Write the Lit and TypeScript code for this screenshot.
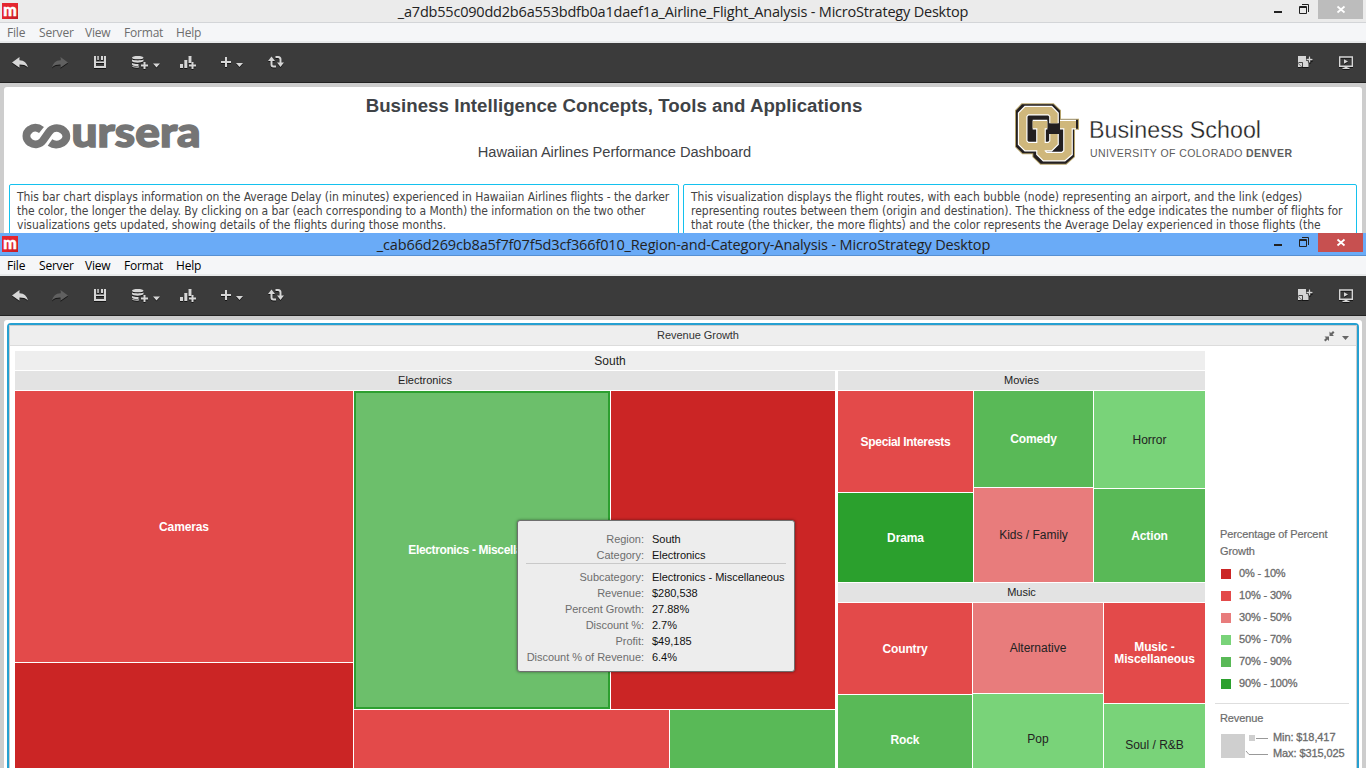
import { LitElement, html, svg, css, nothing, TemplateResult } from "lit";
import { customElement, property } from "lit/decorators.js";
import { classMap } from "lit/directives/class-map.js";

/* ---------- toolbar ---------- */

const plusMark = (x: number, y: number, r: number) =>
  svg`<path d="M${x - r} ${y}H${x + r}M${x} ${y - r}V${y + r}" stroke-width="2" fill="none" stroke="currentColor"/>`;
const caret = (x: number, y: number) => svg`<path d="M${x} ${y}h7l-3.5 4z" fill="currentColor"/>`;

const glyphs: Record<string, unknown> = {
  back: svg`<path d="M12 19.5 19.5 14v3.2c4.8.2 7.5 3 8.5 7.3-2.3-2.4-5-3-8.5-3v3.300z" fill="currentColor"/>`,
  redo: svg`<path d="M28 19.5 20.5 14v3.2c-4.8.2-7.5 3-8.5 7.3 2.3-2.4 5-3 8.5-3v3.300z" fill="currentColor"/>`,
  save: svg`<path d="M15 13v11h10V13" fill="none" stroke="currentColor" stroke-width="2"/><path d="M14 18.500h12v1.500H14zM17.300 13h1.500v4h-1.500zM21 13h2v4h-2z" fill="currentColor"/>`,
  data: svg`<path d="M12 14.700c0-1 2.500-1.700 5.700-1.700s5.800.7 5.800 1.700-2.600 1.600-5.800 1.600-5.700-.6-5.700-1.600zM12 16.600c3 1.200 8.500 1.200 11.500 0v1.700c-1 .8-3.500 1.400-5.800 1.400-3 0-5.700-.7-5.700-1.600zM12 20c2 .9 4.500 1 6.500.9v2.300c-3.500.2-6.500-.5-6.500-1.600zM12 23c2 .6 4.500.7 7 .6v1c-3.500.3-7-.3-7-1.600z" fill="currentColor"/>${plusMark(24.5, 22.5, 3.5)}${caret(33, 20.5)}`,
  chart: svg`<path d="M12 21h3v4h-3zM16.300 17h3v8h-3zM20.500 13h3v7h-3z" fill="currentColor"/>${plusMark(24.5, 22.5, 3.5)}`,
  add: svg`<path d="M13 19h10M18 14v10" stroke="currentColor" stroke-width="2"/>${caret(28, 20)}`,
  refresh: svg`<path d="M15.500 16v5.500q0 2 2 2h2.500M19.500 14H22q2.500 0 2.500 2.500V20" fill="none" stroke="currentColor" stroke-width="2"/><path d="M12 18l3.500-4.500L19 18zM21 19.500h7L24.500 24z" fill="currentColor"/>`,
  note: svg`<path d="M12 13h8v4.500h2.500v6.500h-6.500l-4-4zM12 20.500v3.500h3.500z" fill="currentColor"/><path d="M12.500 19.500h4v4.500" stroke="#222" fill="none" stroke-width=".8"/><path d="M23.500 13.500v6M20.500 16.500h6" stroke="#222" stroke-width="3.200"/><path d="M23.500 13.500v6M20.500 16.500h6" stroke="currentColor" stroke-width="1.400"/>`,
  present: svg`<path d="M13.700 14h12.600v9.200H13.700z" fill="none" stroke="currentColor" stroke-width="1.400"/><path d="M18 16.200l4 2.300-4 2.300zM18.500 23.500h3v1.200h2V26h-7v-1.300h2z" fill="currentColor"/>`,
};

@customElement("tool-icon")
class ToolIcon extends LitElement {
  @property() name = "";
  @property({ type: Number }) width = 40;
  @property({ type: Boolean }) off = false;
  static styles = css`
    :host { display: block; height: 39px; color: #d6d6d6; }
    :host([off]) { color: #606060; }
    svg { display: block; filter: drop-shadow(0 1px 0 #151515); }
  `;
  render() {
    return html`<svg width=${this.width} height="39" viewBox="0 0 ${this.width} 39">${glyphs[this.name]}</svg>`;
  }
}

/* ---------- window frame ---------- */

const menus: [string, number][] = [["File", 32], ["Server", 46], ["View", 39], ["Format", 52], ["Help", 40]];

@customElement("desk-window")
class DeskWindow extends LitElement {
  @property() caption = "";
  @property({ type: Boolean, reflect: true }) active = false;
  static styles = css`
    :host { display: flex; flex-direction: column; overflow: hidden; background: #cdcdcd; flex: none; font-family: "Open Sans", sans-serif; }
    .title { height: 22px; flex: none; display: flex; background: #ebebeb; border-bottom: 1px solid #d3d5d8; color: #222; }
    :host([active]) .title { background: #6aabf7; border-bottom-color: #5790d2; }
    .badge { width: 16px; height: 16px; margin: 3px 0 0 2px; background: linear-gradient(135deg, #e5262f 50%, #c01c25); flex: none; color: #fff;
      font: 900 16px/13px "Lato", sans-serif; text-align: center; -webkit-text-stroke: .5px #fff; }
    .name { flex: 1; text-align: center; font-size: 14.5px; line-height: 22px; white-space: nowrap; letter-spacing: -0.2px; padding-left: 82px; padding-top: 1px; height: 21px; }
    :host([active]) .name { padding-left: 83px; letter-spacing: -0.14px; }
    .controls { display: flex; flex: none; width: 100px; }
    .controls svg { display: block; }
    .shut { width: 45px; height: 19px; background: #bcbcbc; margin-left: auto; margin-right: 3px; }
    :host([active]) .shut { background: #c75050; }
    .menu { height: 18px; flex: none; display: flex; padding-left: 7px; background: #f5f6f8; border-bottom: 2px solid #e8eaeb; font-size: 12px; line-height: 20px; letter-spacing: -0.2px; color: #6d6d6d; }
    :host([active]) .menu { color: #000; }
    .tools { height: 39px; flex: none; display: flex; background: #3b3b3b; border-bottom: 1px solid #222; }
    .gap { flex: 1; }
    .page { flex: 1; min-height: 0; margin: 4px 4px 0; background: #fff; border-radius: 3px 3px 0 0; overflow: hidden; }
  `;
  render() {
    return html`
      <div class="title">
        <div class="badge">m</div>
        <div class="name">${this.caption}</div>
        <div class="controls">
          <svg width="52" height="22"><path d="M8 12h8" stroke="#222" stroke-width="2"/><path d="M33.500 6.500h7v7h-7zM33 7.500h8M36 4.500h6.500V12" fill="none" stroke="#222"/></svg>
          <div class="shut"><svg width="45" height="19"><path d="M19.500 6.500l7 6M26.500 6.500l-7 6" stroke="#fff" stroke-width="1.800"/></svg></div>
        </div>
      </div>
      <div class="menu">${menus.map(([t, w]) => html`<span style="width:${w}px">${t}</span>`)}</div>
      <div class="tools">
        <tool-icon name="back"></tool-icon>
        <tool-icon name="redo" off></tool-icon>
        <tool-icon name="save"></tool-icon>
        <tool-icon name="data" .width=${48}></tool-icon>
        <tool-icon name="chart"></tool-icon>
        <tool-icon name="add" .width=${48}></tool-icon>
        <tool-icon name="refresh"></tool-icon>
        <div class="gap"></div>
        <tool-icon name="note"></tool-icon>
        <tool-icon name="present"></tool-icon>
      </div>
      <div class="page"><slot></slot></div>`;
  }
}

/* ---------- airline dashboard ---------- */

const cPath = "M132 76V50L120 38H50L38 50V134L50 146H120L132 134V108";
const uPath = "M68 80H112M93 80V164L105 176H160L174 164V80M150 80H198";

@customElement("airline-page")
class AirlinePage extends LitElement {
  static styles = css`
    :host { display: block; font-family: "Liberation Sans", Arial, sans-serif; color: #3f4347; }
    .head { display: flex; height: 97px; }
    .head svg { display: block; flex: none; }
    .mid { width: 628px; text-align: center; white-space: nowrap; }
    .h1 { font-size: 18.67px; font-weight: bold; line-height: 22px; padding-top: 8px; letter-spacing: 0.04px; }
    .h2 { font-size: 14.67px; line-height: 18px; padding-top: 26px; padding-left: 1px; letter-spacing: -0.05px; }
    .notes { display: flex; gap: 4px; padding: 0 5px; }
    .note { box-sizing: border-box; height: 80px; border: 1px solid #14c1ee; border-radius: 2px; padding: 5px 7px;
      font: 12px/14px "DejaVu Sans Condensed", "DejaVu Sans", sans-serif; font-stretch: condensed; white-space: nowrap; color: #444; letter-spacing: -0.04px; }
    .first { width: 670px; }
    .second { width: 674px; }
    .tight { letter-spacing: -0.065px; }
    .loose { letter-spacing: -0.01px; }
  `;
  render() {
    return html`
      <div class="head">
        <svg width="296" height="97" viewBox="4 87 296 97">
          <path d="M41.500 130C37.500 126.800 33 127.200 30 129.500C25.200 133 25.200 139 30 142.500C34.500 145.500 40 144.500 43 140.500L49 132C52 127.800 57.500 127 62 129.500C67.500 133 68 139 62.500 142.700C58.500 145.300 53.500 145 50 142.500" fill="none" stroke="#757575" stroke-width="7.800"/>
          <text x="71.500" y="147" textLength="129" lengthAdjust="spacingAndGlyphs" font-family="Lato" font-weight="900" font-size="42.500" fill="#757575" stroke="#757575" stroke-width="1.500">ursera</text>
        </svg>
        <div class="mid">
          <div class="h1">Business Intelligence Concepts, Tools and Applications</div>
          <div class="h2">Hawaiian Airlines Performance Dashboard</div>
        </div>
        <svg width="430" height="97" viewBox="928 87 430 97">
          <g transform="translate(1010 98) scale(.33333)" fill="none">
            <path d="M36 19H130L150 38V65H204V92H192V176L168 197H92L70 176V166H38L18 146V38Z" fill="#231f20" stroke="#b5a36c" stroke-width="6"/>
            <path d="M36 19H130L150 38V65H204V92H192V176L168 197H92L70 176V166H38L18 146V38Z" fill="#231f20"/>
            <path d="${cPath}${uPath}" stroke="#fff" stroke-width="29"/>
            <path d="${cPath}${uPath}" stroke="#cfb77c" stroke-width="22"/>
          </g>
          <text x="1089" y="138" textLength="172" lengthAdjust="spacingAndGlyphs" font-family="Liberation Sans" font-size="23.500" fill="#222" stroke="#fff" stroke-width=".3">Business School</text>
          <text x="1090" y="156.500" textLength="202" font-family="Liberation Sans" font-size="10.500" fill="#5c5c5c">UNIVERSITY OF COLORADO <tspan font-weight="bold">DENVER</tspan></text>
        </svg>
      </div>
      <div class="notes">
        <div class="note first">
          <div class="tight">This bar chart displays information on the Average Delay (in minutes) experienced in Hawaiian Airlines flights - the darker</div>
          <div class="tight">the color, the longer the delay. By clicking on a bar (each corresponding to a Month) the information on the two other</div>
          <div class="loose">visualizations gets updated, showing details of the flights during those months.</div>
        </div>
        <div class="note second">
          <div class="loose">This visualization displays the flight routes, with each bubble (node) representing an airport, and the link (edges)</div>
          <div class="loose">representing routes between them (origin and destination). The thickness of the edge indicates the number of flights for</div>
          <div>that route (the thicker, the more flights) and the color represents the Average Delay experienced in those flights (the</div>
        </div>
      </div>`;
  }
}

/* ---------- treemap ---------- */

type Cell = { size: number; label?: string; tone?: string; dark?: boolean; picked?: boolean; tight?: boolean; dir?: "row" | "column"; kids?: Cell[] };

const tone = { g1: "#cb2525", g2: "#e34a4a", g3: "#e87c7c", g4: "#79d379", g5: "#59b957", g6: "#2ba02d" };

const electronics: Cell = {
  size: 394, dir: "row", kids: [
    { size: 338, dir: "column", kids: [{ size: 271, label: "Cameras", tone: tone.g2 }, { size: 122, tone: tone.g1 }] },
    { size: 481, dir: "column", kids: [
      { size: 318, dir: "row", kids: [{ size: 256, label: "Electronics - Miscellaneous", tone: "#6cbf6b", picked: true }, { size: 224, tone: tone.g1 }] },
      { size: 75, dir: "row", kids: [{ size: 315, tone: tone.g2 }, { size: 165, tone: tone.g5 }] },
    ] },
  ],
};
const movies: Cell = {
  size: 191, dir: "row", kids: [
    { size: 135, dir: "column", kids: [{ size: 101, label: "Special Interests", tone: tone.g2, tight: true }, { size: 89, label: "Drama", tone: tone.g6 }] },
    { size: 119, dir: "column", kids: [{ size: 96, label: "Comedy", tone: tone.g5 }, { size: 94, label: "Kids / Family", tone: tone.g3, dark: true }] },
    { size: 111, dir: "column", kids: [{ size: 97, label: "Horror", tone: tone.g4, dark: true }, { size: 93, label: "Action", tone: tone.g5 }] },
  ],
};
const music: Cell = {
  size: 182, dir: "row", kids: [
    { size: 134, dir: "column", kids: [{ size: 91, label: "Country", tone: tone.g2 }, { size: 90, label: "Rock", tone: tone.g5 }] },
    { size: 130, dir: "column", kids: [{ size: 90, label: "Alternative", tone: tone.g3, dark: true }, { size: 90, label: "Pop", tone: tone.g4, dark: true }] },
    { size: 101, dir: "column", kids: [{ size: 100, label: "Music - Miscellaneous", tone: tone.g2 }, { size: 81, label: "Soul / R&B", tone: tone.g4, dark: true }] },
  ],
};

const legend: [string, string][] = [
  ["0% - 10%", tone.g1], ["10% - 30%", tone.g2], ["30% - 50%", tone.g3],
  ["50% - 70%", tone.g4], ["70% - 90%", tone.g5], ["90% - 100%", tone.g6],
];
const facts: [string, string][] = [
  ["Region:", "South"], ["Category:", "Electronics"], ["", ""],
  ["Subcategory:", "Electronics - Miscellaneous"], ["Revenue:", "$280,538"], ["Percent Growth:", "27.88%"],
  ["Discount %:", "2.7%"], ["Profit:", "$49,185"], ["Discount % of Revenue:", "6.4%"],
];

@customElement("revenue-page")
class RevenuePage extends LitElement {
  static styles = css`
    :host { display: block; padding: 3px 3px 0; font-family: "Liberation Sans", Arial, sans-serif; font-size: 11px; }
    .panel { box-sizing: border-box; height: 470px; border: 2px solid #26a0d1; border-radius: 4px; }
    .inner { border: 1px solid #ccc; border-bottom: 0; height: 466px; }
    .bar { height: 19px; background: #eee; border-bottom: 1px solid #dcdcdc; display: flex; color: #333; line-height: 19px; }
    .bar span { flex: 1; text-align: center; padding-left: 66px; letter-spacing: -0.05px; }
    .bar svg { display: block; flex: none; }
    .body { display: flex; padding: 5px 0 0 5px; }
    .map { width: 1190px; display: flex; flex-direction: column; gap: 1px; flex: none; }
    .region { height: 19px; background: #eee; text-align: center; font-size: 12px; line-height: 21px; color: #222; }
    .groups { display: flex; gap: 3px; }
    .wide { width: 820px; }
    .slim { width: 367px; }
    .stack { display: flex; flex-direction: column; gap: 1px; flex: none; }
    .band { height: 19px; background: #e3e3e3; text-align: center; line-height: 19px; color: #222; flex: none; }
    .set { display: flex; gap: 1px; min-width: 0; min-height: 0; }
    .column { flex-direction: column; }
    .cell { display: flex; align-items: center; justify-content: center; text-align: center; color: #fff; font-weight: bold; font-size: 12px; line-height: 12px; letter-spacing: -0.12px; min-width: 0; min-height: 0; box-sizing: border-box; }
    .dark { color: #222; font-weight: normal; letter-spacing: 0; }
    .tight { letter-spacing: -0.33px; }
    .picked { border: 2px solid #2d9f30; white-space: nowrap; letter-spacing: -0.37px; }
    .legend { margin-left: 10px; width: 134px; color: #6b6b6b; padding-top: 175px; }
    .cap { padding-left: 5px; line-height: 17px; letter-spacing: -0.1px; -webkit-text-stroke: .2px #6b6b6b; width: 112px; }
    .item { display: flex; align-items: center; height: 22px; padding-left: 6px; letter-spacing: -0.15px; -webkit-text-stroke: .3px #6b6b6b; }
    .chip { width: 10px; height: 10px; margin: 1px 8px 0 0; }
    .items { padding-top: 2px; height: 141px; border-bottom: 1px solid #dedede; }
    .sizes { display: flex; padding: 2px 0 0 6px; letter-spacing: -0.1px; -webkit-text-stroke: .3px #6b6b6b; }
    .sizes svg { display: block; flex: none; margin-top: 1px; }
    .range { line-height: 16px; padding-left: 1px; white-space: nowrap; }
    .rev { padding-top: 6px; }
    .tip { position: absolute; left: 517px; top: 520px; width: 278px; height: 152px; box-sizing: border-box; border: 1px solid #6f6f6f; border-radius: 3px; background: #ededed; box-shadow: 0 0 3px rgba(0,0,0,.5);
      padding: 10px 8px 0; display: grid; grid-template-columns: 118px 1fr; column-gap: 8px; grid-template-rows: 16px 16px 6px; grid-auto-rows: 16px; line-height: 16px; white-space: nowrap; align-content: start; letter-spacing: -0.03px; }
    .key { text-align: right; color: #6e6e6e; }
    .val { color: #111; }
    .rule { grid-column: 1 / 3; height: 1px; background: #c9c9c9; }
  `;
  cell(c: Cell): TemplateResult {
    if (c.kids) {
      return html`<div class=${classMap({ set: true, column: c.dir === "column" })} style="flex:0 0 ${c.size}px">${c.kids.map((k) => this.cell(k))}</div>`;
    }
    return html`<div class=${classMap({ cell: true, dark: !!c.dark, picked: !!c.picked, tight: !!c.tight })} style="flex:0 0 ${c.size}px;background:${c.tone}">${c.label ?? nothing}</div>`;
  }
  group(name: string, c: Cell) {
    return html`<div class="band">${name}</div>${this.cell(c)}`;
  }
  render() {
    return html`
      <div class="panel"><div class="inner">
        <div class="bar">
          <span>Revenue Growth</span>
          <svg width="36" height="19"><path d="M9 5.500V10h4.500L12 8.500l2-2L12.500 5l-2 2zM4 10.500h4.500V15L7 13.500l-2 2L3.500 14l2-2z" fill="#666" transform="translate(0.500 0)"/><path d="M22 10h7l-3.500 4z" fill="#666"/></svg>
        </div>
        <div class="body">
          <div class="map">
            <div class="region">South</div>
            <div class="groups">
              <div class="stack wide">${this.group("Electronics", electronics)}</div>
              <div class="stack slim">${this.group("Movies", movies)}${this.group("Music", music)}</div>
            </div>
          </div>
          <div class="legend">
            <div class="cap">Percentage of Percent Growth</div>
            <div class="items">${legend.map(([t, c]) => html`<div class="item"><div class="chip" style="background:${c}"></div>${t}</div>`)}</div>
            <div class="cap rev">Revenue</div>
            <div class="sizes">
              <svg width="51" height="32" viewBox="1221 730 51 32"><path d="M1221 734h24v24h-24zM1249 735h6v6h-6z" fill="#cfcfcf"/><path d="M1256 738.500h12M1246 751l3 3.500h19" fill="none" stroke="#999"/></svg>
              <div class="range"><div>Min: $18,417</div><div>Max: $315,025</div></div>
            </div>
          </div>
        </div>
      </div></div>
      <div class="tip">${facts.map(([k, v]) => (k ? html`<div class="key">${k}</div><div class="val">${v}</div>` : html`<div class="rule"></div>`))}</div>`;
  }
}

@customElement("app-root")
class AppRoot extends LitElement {
  static styles = css`
    :host { display: flex; flex-direction: column; width: 1366px; height: 768px; overflow: hidden; position: relative; background: #cdcdcd; }
    .rear { height: 233px; }
    .front { height: 535px; }
  `;
  render() {
    return html`
      <desk-window class="rear" caption="_a7db55c090dd2b6a553bdfb0a1daef1a_Airline_Flight_Analysis - MicroStrategy Desktop"><airline-page></airline-page></desk-window>
      <desk-window class="front" active caption="_cab66d269cb8a5f7f07f5d3cf366f010_Region-and-Category-Analysis - MicroStrategy Desktop"><revenue-page></revenue-page></desk-window>`;
  }
}
